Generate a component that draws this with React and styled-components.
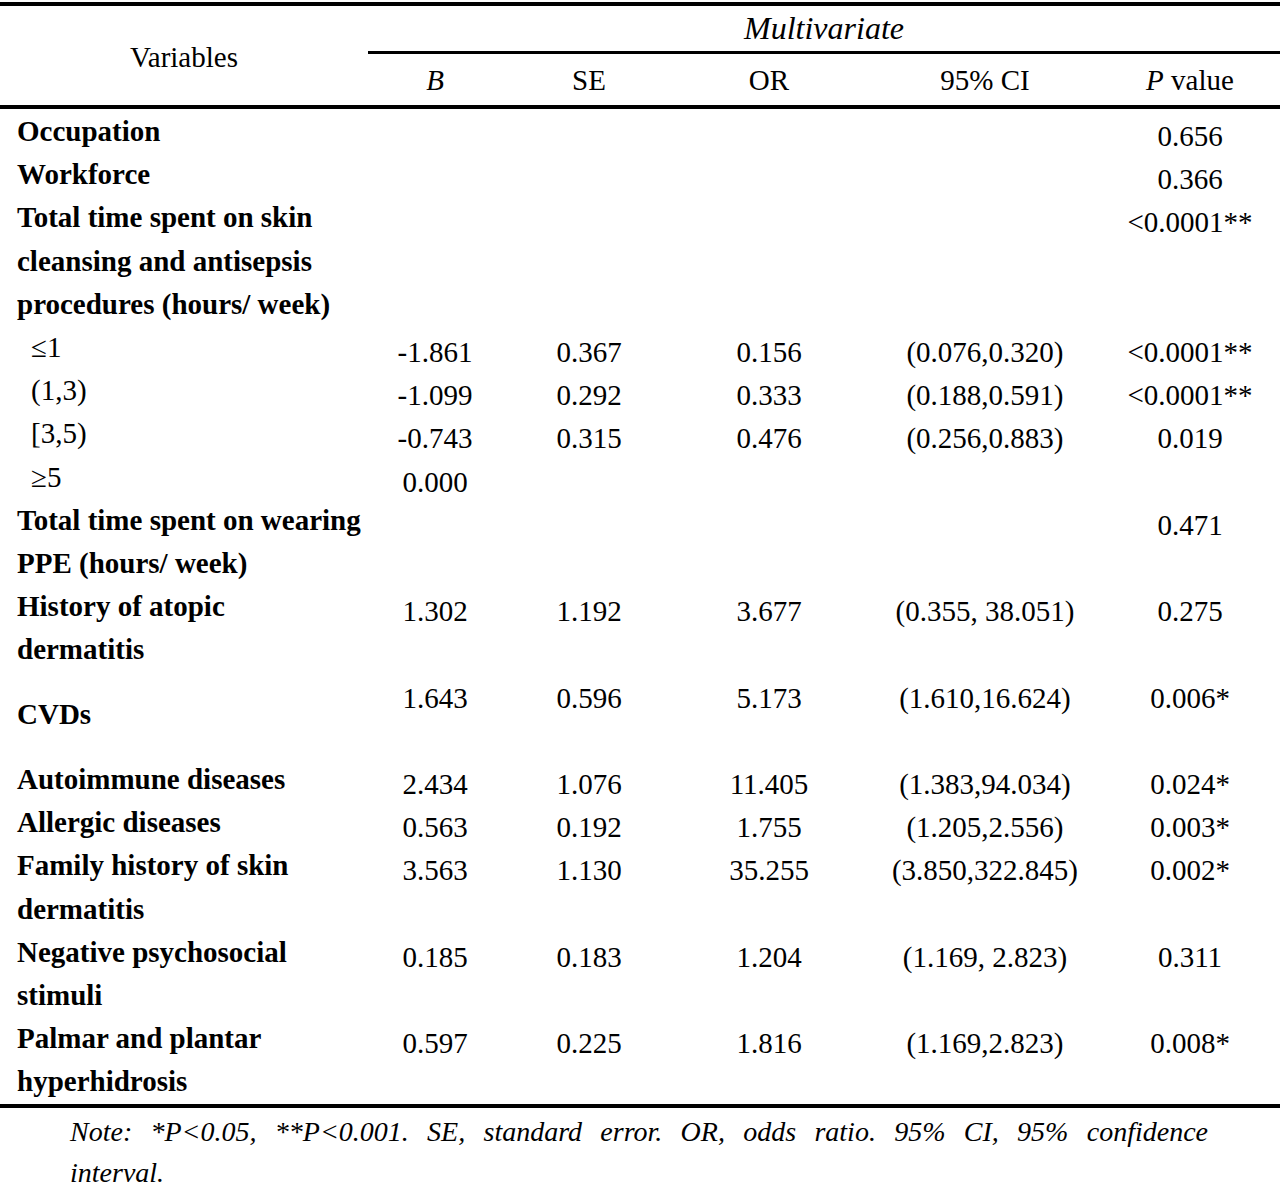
import React from "react";
import styled, { createGlobalStyle } from "styled-components";

const GlobalStyle = createGlobalStyle`
  html, body {
    margin: 0;
    padding: 0;
    background: #ffffff;
  }
  body {
    font-family: "Liberation Serif", "Times New Roman", serif;
    color: #000000;
  }
`;

const COLS = "368px 134px 174px 186px 246px 164px";
const LINE = "43.2px";

const Page = styled.div`
  width: 1280px;
  padding-top: 2px;
  font-size: 29px;
`;

const Head = styled.div`
  display: grid;
  grid-template-columns: 368px 1fr;
  grid-template-rows: 48px 51px;
  border-top: 4px solid #000;
  border-bottom: 4px solid #000;
`;

const VarHead = styled.div`
  grid-row: 1 / span 2;
  display: flex;
  align-items: center;
  justify-content: center;
  padding-top: 4px;
`;

const GroupHead = styled.div`
  display: flex;
  align-items: center;
  justify-content: center;
  font-style: italic;
  font-size: 32px;
  border-bottom: 3px solid #000;
`;

const SubHead = styled.div`
  display: grid;
  grid-template-columns: 134px 174px 186px 246px 164px;
  align-items: center;
  padding-top: 2px;
`;

const HeadCell = styled.div`
  text-align: center;
  font-style: ${(p) => (p.$italic ? "italic" : "normal")};
`;

const Body = styled.div`
  padding-top: 1px;
  border-bottom: 4px solid #000;
`;

const Row = styled.div`
  display: grid;
  grid-template-columns: ${COLS};
  line-height: ${LINE};
`;

const Label = styled.div`
  padding-left: ${(p) => (p.$sub ? "31px" : "17px")};
  font-weight: ${(p) => (p.$sub ? "normal" : "bold")};
  white-space: nowrap;
  min-height: ${(p) => (p.$tall ? "86.4px" : "0")};
  display: flex;
  flex-direction: column;
  justify-content: center;
`;

const Value = styled.div`
  text-align: center;
  padding-top: 5px;
  margin-bottom: -5px;
  white-space: nowrap;
`;

const Note = styled.div`
  padding: 3px 72px 0 70px;
  font-style: italic;
  font-size: 28px;
  line-height: 41px;
`;

const NoteLine = styled.div`
  text-align: ${(p) => (p.$full ? "justify" : "left")};
  text-align-last: ${(p) => (p.$full ? "justify" : "left")};
`;

const rows = [
  { label: ["Occupation"], vals: ["", "", "", "", "0.656"] },
  { label: ["Workforce"], vals: ["", "", "", "", "0.366"] },
  {
    label: ["Total time spent on skin", "cleansing and antisepsis", "procedures (hours/ week)"],
    vals: ["", "", "", "", "<0.0001**"],
  },
  { label: ["\u22641"], sub: true, vals: ["-1.861", "0.367", "0.156", "(0.076,0.320)", "<0.0001**"] },
  { label: ["(1,3)"], sub: true, vals: ["-1.099", "0.292", "0.333", "(0.188,0.591)", "<0.0001**"] },
  { label: ["[3,5)"], sub: true, vals: ["-0.743", "0.315", "0.476", "(0.256,0.883)", "0.019"] },
  { label: ["\u22655"], sub: true, vals: ["0.000", "", "", "", ""] },
  { label: ["Total time spent on wearing", "PPE (hours/ week)"], vals: ["", "", "", "", "0.471"] },
  { label: ["History of atopic", "dermatitis"], vals: ["1.302", "1.192", "3.677", "(0.355, 38.051)", "0.275"] },
  { label: ["CVDs"], tall: true, vals: ["1.643", "0.596", "5.173", "(1.610,16.624)", "0.006*"] },
  { label: ["Autoimmune diseases"], vals: ["2.434", "1.076", "11.405", "(1.383,94.034)", "0.024*"] },
  { label: ["Allergic diseases"], vals: ["0.563", "0.192", "1.755", "(1.205,2.556)", "0.003*"] },
  { label: ["Family history of skin", "dermatitis"], vals: ["3.563", "1.130", "35.255", "(3.850,322.845)", "0.002*"] },
  { label: ["Negative psychosocial", "stimuli"], vals: ["0.185", "0.183", "1.204", "(1.169, 2.823)", "0.311"] },
  { label: ["Palmar and plantar", "hyperhidrosis"], vals: ["0.597", "0.225", "1.816", "(1.169,2.823)", "0.008*"] },
];

export default function App() {
  return (
    <Page>
      <GlobalStyle />
      <Head>
        <VarHead>Variables</VarHead>
        <GroupHead>Multivariate</GroupHead>
        <SubHead>
          <HeadCell $italic>B</HeadCell>
          <HeadCell>SE</HeadCell>
          <HeadCell>OR</HeadCell>
          <HeadCell>95% CI</HeadCell>
          <HeadCell>
            <i>P</i> value
          </HeadCell>
        </SubHead>
      </Head>
      <Body>
        {rows.map((r, i) => (
          <Row key={i}>
            <Label $sub={r.sub} $tall={r.tall}>
              {r.label.map((l, j) => (
                <span key={j}>{l}</span>
              ))}
            </Label>
            {r.vals.map((v, j) => (
              <Value key={j}>{v}</Value>
            ))}
          </Row>
        ))}
      </Body>
      <Note>
        <NoteLine $full>
          Note: *P&lt;0.05, **P&lt;0.001. SE, standard error. OR, odds ratio. 95% CI, 95% confidence
        </NoteLine>
        <NoteLine>interval.</NoteLine>
      </Note>
    </Page>
  );
}
